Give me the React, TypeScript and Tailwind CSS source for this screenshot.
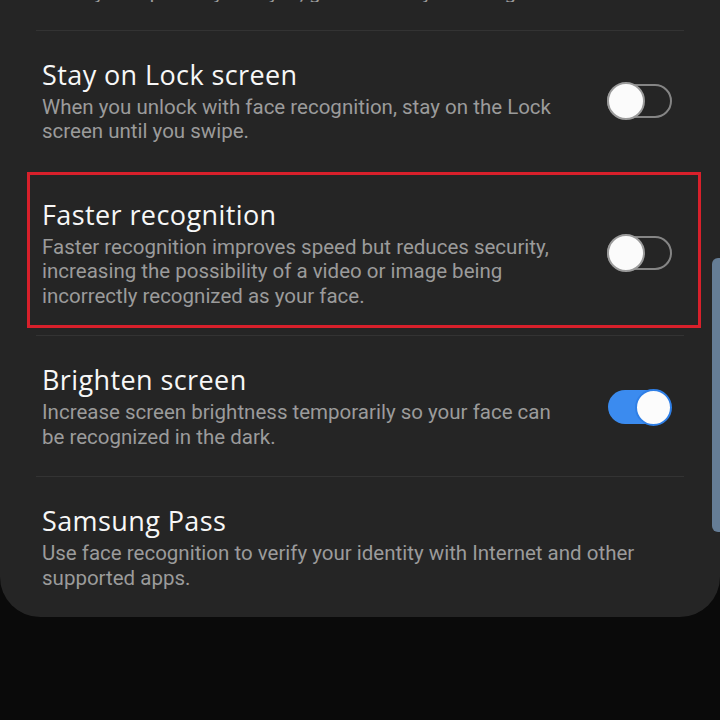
import React from "react"

type Item = {
  title: string
  desc: string
  toggle?: "on" | "off"
  highlight?: boolean
}

const items: Item[] = [
  {
    title: "Stay on Lock screen",
    desc: "When you unlock with face recognition, stay on the Lock screen until you swipe.",
    toggle: "off",
  },
  {
    title: "Faster recognition",
    desc: "Faster recognition improves speed but reduces security, increasing the possibility of a video or image being incorrectly recognized as your face.",
    toggle: "off",
    highlight: true,
  },
  {
    title: "Brighten screen",
    desc: "Increase screen brightness temporarily so your face can be recognized in the dark.",
    toggle: "on",
  },
  {
    title: "Samsung Pass",
    desc: "Use face recognition to verify your identity with Internet and other supported apps.",
  },
]

function Toggle({ on }: { on: boolean }) {
  if (on) {
    return (
      <div className="relative w-[64px] h-[36px] flex items-center">
        <div className="w-[62px] h-[34px] rounded-full bg-[#3b8bef]" />
        <div className="absolute right-0 top-0 w-[37px] h-[37px] rounded-full bg-[#fcfcfc] border-2 border-[#2f7fe6]" />
      </div>
    )
  }
  return (
    <div className="relative w-[65px] h-[38px] flex items-center">
      <div className="w-[65px] h-[34px] rounded-full border-2 border-[#858585]" />
      <div className="absolute left-0 top-0 w-[38px] h-[38px] rounded-full bg-[#fbfbfb] border-2 border-[#9a9a9a]" />
    </div>
  )
}

function Row({ item }: { item: Item }) {
  return (
    <div className="relative flex items-center pl-[42px] pr-[48px] pt-[28px] pb-[27px]">
      <div className="flex-1 pr-[36px]">
        <div className="text-[27px] leading-[32px] tracking-[0.4px] text-[#f7f7f7] font-['Open_Sans',sans-serif]">{item.title}</div>
        <div className="text-[20.5px] leading-[24.5px] text-[#9b9b9b] mt-[4px]">{item.desc}</div>
      </div>
      {item.toggle && <Toggle on={item.toggle === "on"} />}
      {item.highlight && (
        <div className="absolute left-[27px] right-[19px] top-[1px] bottom-[7px] border-[3px] border-[#d8202b]" />
      )}
    </div>
  )
}

export default function App() {
  return (
    <div className="w-[720px] h-[720px] overflow-hidden bg-[#0a0a0a] relative font-['Roboto','Noto_Sans',sans-serif]">
      <div className="bg-[#252525] rounded-b-[40px] -mt-[17px] h-[634px] flex flex-col">
        {/* previous item, scrolled off the top */}
        <div className="pl-[42px] h-[22px] overflow-hidden">
          <div className="-mt-[3px] text-[20.5px] leading-[24.5px] text-[#9b9b9b]">
            while you squeeze your eyes, gestures may be recognized
          </div>
        </div>
        <div className="mt-[28px] mx-[36px] h-px bg-[#333333]" />
        {items.map((item, i) => (
          <div key={item.title}>
            {i > 1 && <div className="mx-[36px] h-px bg-[#333333]" />}
            <Row item={item} />
          </div>
        ))}
      </div>
      {/* scrollbar */}
      <div className="absolute right-0 top-[258px] w-[8px] h-[274px] rounded-l-[6px] bg-[#657d96]" />
    </div>
  )
}
